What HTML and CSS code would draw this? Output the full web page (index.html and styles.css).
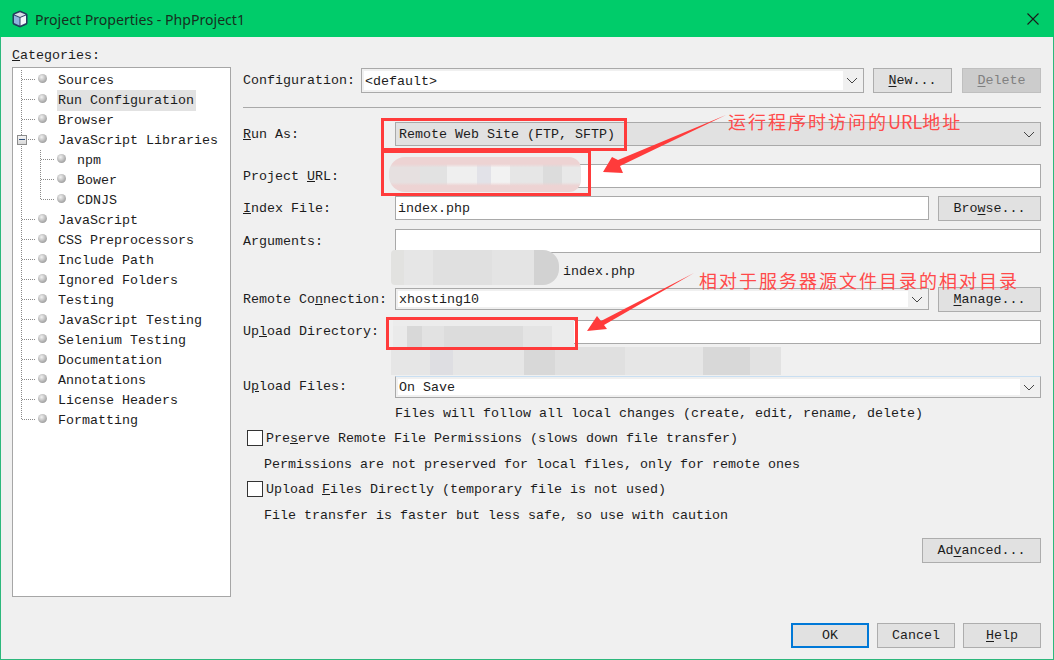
FILE: index.html
```html
<!DOCTYPE html>
<html lang="en">
<head>
    <meta charset="UTF-8">
    <meta name="viewport" content="width=device-width, initial-scale=1.0">
    <title>Project Properties - PhpProject1</title>
    <link rel="stylesheet" href="styles.css">
</head>
<body>
    <main class="window">
        <header class="titlebar">
            <svg class="app-icon" width="16" height="18" viewBox="0 0 16 18">
                <path d="M8 1 L14.5 3.8 Q15 4 15 4.8 V13.2 Q15 14 14.5 14.2 L8 17 L1.5 14.2 Q1 14 1 13.2 V4.8 Q1 4 1.5 3.8 Z" fill="#2c4468" stroke="#22375a"/>
                <path d="M8 2.2 L13.6 4.6 L8 7 L2.4 4.6 Z" fill="#d6dde6"/>
                <path d="M8.5 7.8 L14 5.5 V13 L8.5 15.6 Z" fill="#f2f6fa"/>
                <path d="M2 5.5 L7.5 7.8 V15.6 L2 13 Z" fill="#8fb4de"/>
            </svg>
            <span class="title-text">Project Properties - PhpProject1</span>
            <svg class="close-icon" width="14" height="14" viewBox="0 0 14 14">
                <path d="M1.5 1.5 L12.5 12.5 M12.5 1.5 L1.5 12.5" stroke="#1a1a1a" stroke-width="1.1" fill="none"/>
            </svg>
        </header>

        <div class="content">
            <section class="categories">
                <div class="categories-label"><u>C</u>ategories:</div>
                <ul class="tree">
                    <li class="node"><i class="branch"></i><i class="dot"></i><span>Sources</span></li>
                    <li class="node"><i class="branch"></i><i class="dot"></i><span class="selected">Run Configuration</span></li>
                    <li class="node"><i class="branch"></i><i class="dot"></i><span>Browser</span></li>
                    <li class="node"><i class="branch"><b class="minus"></b></i><i class="dot"></i><span>JavaScript Libraries</span></li>
                    <li class="node"><i class="pipe"></i><i class="branch-sub"></i><i class="dot"></i><span>npm</span></li>
                    <li class="node"><i class="pipe"></i><i class="branch-sub"></i><i class="dot"></i><span>Bower</span></li>
                    <li class="node"><i class="pipe"></i><i class="branch-sub last"></i><i class="dot"></i><span>CDNJS</span></li>
                    <li class="node"><i class="branch"></i><i class="dot"></i><span>JavaScript</span></li>
                    <li class="node"><i class="branch"></i><i class="dot"></i><span>CSS Preprocessors</span></li>
                    <li class="node"><i class="branch"></i><i class="dot"></i><span>Include Path</span></li>
                    <li class="node"><i class="branch"></i><i class="dot"></i><span>Ignored Folders</span></li>
                    <li class="node"><i class="branch"></i><i class="dot"></i><span>Testing</span></li>
                    <li class="node"><i class="branch"></i><i class="dot"></i><span>JavaScript Testing</span></li>
                    <li class="node"><i class="branch"></i><i class="dot"></i><span>Selenium Testing</span></li>
                    <li class="node"><i class="branch"></i><i class="dot"></i><span>Documentation</span></li>
                    <li class="node"><i class="branch"></i><i class="dot"></i><span>Annotations</span></li>
                    <li class="node"><i class="branch"></i><i class="dot"></i><span>License Headers</span></li>
                    <li class="node"><i class="branch last"></i><i class="dot"></i><span>Formatting</span></li>
                </ul>
            </section>

            <section class="settings">
                <div class="config-row">
                    <label class="config-label">Confi<u>g</u>uration:</label>
                    <div class="combo config-combo"><span class="combo-value">&lt;default&gt;</span><i class="chevron"></i></div>
                    <button class="btn btn-small"><u>N</u>ew...</button>
                    <button class="btn btn-small btn-disabled"><u>D</u>elete</button>
                </div>
                <hr class="divider">

                <div class="row row-run">
                    <label><u>R</u>un As:</label>
                    <div class="combo combo-grey"><span class="combo-value">Remote Web Site (FTP, SFTP)</span><i class="chevron"></i></div>
                </div>
                <div class="row row-url">
                    <label>Project <u>U</u>RL:</label>
                    <div class="field"></div>
                </div>
                <div class="row row-index">
                    <label><u>I</u>ndex File:</label>
                    <div class="field">index.php</div>
                    <button class="btn btn-side">Bro<u>w</u>se...</button>
                </div>
                <div class="row row-args">
                    <label>Ar<u>g</u>uments:</label>
                    <div class="field"></div>
                </div>
                <div class="row-hint">index.php</div>
                <div class="row row-remote">
                    <label>Remote Co<u>n</u>nection:</label>
                    <div class="combo"><span class="combo-value">xhosting10</span><i class="chevron"></i></div>
                    <button class="btn btn-side"><u>M</u>anage...</button>
                </div>
                <div class="row row-dir">
                    <label>Up<u>l</u>oad Directory:</label>
                    <div class="field"></div>
                </div>
                <div class="row row-files">
                    <label>U<u>p</u>load Files:</label>
                    <div class="combo combo-focus"><span class="combo-value">On Save</span><i class="chevron"></i></div>
                </div>
                <p class="note note-files">Files will follow all local changes (create, edit, rename, delete)</p>
                <div class="check check-first"><i class="box"></i><span>Pre<u>s</u>erve Remote File Permissions (slows down file transfer)</span></div>
                <p class="note note-check">Permissions are not preserved for local files, only for remote ones</p>
                <div class="check check-second"><i class="box"></i><span>Upload <u>F</u>iles Directly (temporary file is not used)</span></div>
                <p class="note note-check">File transfer is faster but less safe, so use with caution</p>
                <div class="advanced-row"><button class="btn btn-advanced">Ad<u>v</u>anced...</button></div>
            </section>
        </div>

        <footer class="actions">
            <button class="btn btn-action btn-default">OK</button>
            <button class="btn btn-action">Cancel</button>
            <button class="btn btn-action"><u>H</u>elp</button>
        </footer>

        <!-- screenshot markup on top of the dialog -->
        <div class="blur blur-url"></div>
        <div class="blur blur-path"></div>
        <div class="blur blur-dir"></div>
        <div class="blur blur-dir-note"></div>
        <div class="mark mark-run"></div>
        <div class="mark mark-url"></div>
        <div class="mark mark-dir"></div>
        <div class="callout callout-run">运行程序时访问的<span class="callout-latin">URL</span>地址</div>
        <div class="callout callout-dir">相对于服务器源文件目录的相对目录</div>
        <svg class="arrows" width="1054" height="660" viewBox="0 0 1054 660">
            <polygon points="725,115 617,160 611,157 602,172 622,173 619,166" fill="#ff3b3b"/>
            <polygon points="693,273 600,321 596,316 586,331 606,329 603,325" fill="#ff3b3b"/>
        </svg>
    </main>
</body>
</html>
```

FILE: styles.css
```css
*{
    box-sizing: border-box;
}

html, body{
    margin: 0;
    height: 100%;
    overflow: hidden;
}

.window{
    position: relative;
    width: 1054px;
    height: 660px;
    display: flex;
    flex-direction: column;
    background-color: #f0f0f0;
    border: 1px solid #2db87c;
    border-top: none;
    font-family: "Liberation Mono", "Courier New", monospace;
    font-size: 13.33px;
    color: #1c1c1c;
}

/* title bar */

.titlebar{
    height: 37px;
    margin: 0 -1px;
    flex: none;
    display: flex;
    align-items: center;
    padding: 0 14px 0 12px;
    background-color: #00cc6a;
}

.app-icon{
    margin-right: 7px;
}

.title-text{
    flex: 1;
    font-family: "Noto Sans", sans-serif;
    font-size: 14.1px;
    padding-top: 1px;
    color: #16301f;
}

/* main area */

.content{
    flex: 1;
    display: flex;
    min-height: 0;
}

.categories{
    width: 219px;
    margin-left: 11px;
    padding-top: 10px;
    display: flex;
    flex-direction: column;
}

.categories-label{
    height: 20px;
    line-height: 18px;
}

.tree{
    list-style: none;
    margin: 0;
    padding: 0;
    height: 530px;
    background-color: white;
    border: 1px solid #a6a6a6;
    padding-top: 2px;
}

.node{
    height: 20px;
    display: flex;
    align-items: center;
}

.node i{
    flex: none;
}

.branch, .branch-sub, .pipe{
    height: 20px;
    display: block;
    position: relative;
    background-repeat: no-repeat;
}

/* dotted tree lines */

.branch{
    width: 25px;
    background-image:
        repeating-linear-gradient(to bottom, #8a8a8a 0 1px, transparent 1px 2px),
        repeating-linear-gradient(to right, #8a8a8a 0 1px, transparent 1px 2px);
    background-size: 1px 20px, 13px 1px;
    background-position: 8px 0, 9px 9px;
}

.pipe{
    width: 19px;
    background-image: repeating-linear-gradient(to bottom, #8a8a8a 0 1px, transparent 1px 2px);
    background-size: 1px 20px;
    background-position: 8px 0;
}

.branch-sub{
    width: 25px;
    background-image:
        repeating-linear-gradient(to bottom, #8a8a8a 0 1px, transparent 1px 2px),
        repeating-linear-gradient(to right, #8a8a8a 0 1px, transparent 1px 2px);
    background-size: 1px 20px, 13px 1px;
    background-position: 8px 0, 9px 9px;
}

.branch.last, .branch-sub.last{
    background-size: 1px 10px, 13px 1px;
}

.minus{
    position: absolute;
    left: 4px;
    top: 5px;
    width: 10px;
    height: 10px;
    background: linear-gradient(#f4f4f4, #d8d8d8);
    border: 1px solid #8c8c8c;
}

.minus::after{
    content: "";
    position: absolute;
    left: 1px;
    top: 3px;
    width: 6px;
    height: 1px;
    background-color: #34507a;
}

.dot{
    width: 9px;
    height: 9px;
    margin-top: -3px;
    margin-right: 11px;
    border-radius: 50%;
    background: radial-gradient(circle at 40% 35%, #f2f2f2, #a4a4a4 70%, #8c8c8c);
}

.node span{
    line-height: 20px;
    padding-top: 1px;
    white-space: nowrap;
}

.node .selected{
    background-color: #e2e2e2;
    margin-left: -1px;
    padding: 1px 2px 0 1px;
}

.settings{
    width: 798px;
    margin-left: 12px;
    padding-top: 31px;
}

.settings p{
    margin: 0;
}

/* rows */

.config-row{
    display: flex;
    align-items: center;
    height: 25px;
}

.config-label{
    width: 118px;
}

.config-combo{
    flex: none;
    width: 503px;
    height: 22px;
    margin-right: 9px;
}

.divider{
    margin: 14px 0 14px 0;
    height: 1px;
    border: none;
    background-color: #a9a9a9;
}

.row{
    display: flex;
    align-items: center;
    height: 24px;
}

.row label{
    width: 152px;
    flex: none;
}

.row-url{ margin-top: 18px; }
.row-index{ margin-top: 8px; }
.row-args{ margin-top: 9px; }
.row-remote{ margin-top: 0; height: 22px; }
.row-dir{ margin-top: 10px; }
.row-files{ margin-top: 32px; height: 22px; }

.row-dir label, .row-files label{
    padding-bottom: 2px;
}

.row-hint{
    height: 35px;
    line-height: 38px;
    padding-left: 320px;
}

/* inputs */

.field{
    flex: 1;
    height: 100%;
    min-width: 0;
    padding-left: 2px;
    line-height: 23px;
    background-color: white;
    border: 1px solid #a9a9a9;
}

.combo{
    flex: 1;
    height: 100%;
    display: flex;
    align-items: center;
    padding: 2px;
    background-color: #f0f0f0;
    border: 1px solid #a9a9a9;
}

.combo-value{
    flex: 1;
    height: 100%;
    padding-left: 1px;
    padding-top: 1px;
    background-color: white;
    display: flex;
    align-items: center;
}

.combo-grey{
    background-color: #e1e1e1;
}

.combo-grey .combo-value{
    background-color: #e1e1e1;
}

.combo-focus{
    border-top-color: #c9dff2;
}

.combo-focus .combo-value{
    padding-top: 0;
}

.chevron{
    flex: none;
    width: 18px;
    height: 100%;
    background:
        linear-gradient(45deg, transparent 46%, #444 46% 54%, transparent 54%) 4px 50% / 5px 5px no-repeat,
        linear-gradient(-45deg, transparent 46%, #444 46% 54%, transparent 54%) 9px 50% / 5px 5px no-repeat;
}

/* buttons */

.btn{
    font: inherit;
    color: inherit;
    height: 25px;
    padding: 0;
    background-color: #e1e1e1;
    border: 1px solid #adadad;
}

.btn u{
    text-underline-offset: 2px;
}

.btn-small{
    width: 79px;
}

.btn-small + .btn-small{
    margin-left: 10px;
}

.btn-disabled{
    background-color: #cccccc;
    border-color: #bfbfbf;
    color: #808080;
}

.btn-side{
    width: 103px;
    margin-left: 9px;
    flex: none;
}

.btn-action{
    width: 78px;
}

.btn-default{
    border: 2px solid #0078d7;
}

/* notes and check boxes */

.note{
    padding-left: 152px;
    line-height: 16px;
}

.settings .note-files{
    margin-top: 8px;
}

.settings .note-check{
    padding-left: 21px;
    margin-top: 11px;
}

.check{
    display: flex;
    align-items: center;
    height: 16px;
    padding-left: 4px;
}

.check-first{
    margin-top: 8px;
}

.check-second{
    margin-top: 8px;
}

.box{
    width: 16px;
    height: 16px;
    margin-right: 3px;
    background-color: white;
    border: 1px solid #333;
}

.advanced-row{
    display: flex;
    justify-content: flex-end;
    margin-top: 14px;
}

.btn-advanced{
    width: 119px;
}

.actions{
    flex: none;
    display: flex;
    justify-content: flex-end;
    gap: 8px;
    padding: 0 12px 11px 0;
}

/* markup overlay */

.blur, .mark, .callout, .arrows{
    position: absolute;
}

.blur{
    background-color: #e4e4e4;
}

.blur-url{
    left: 388px;
    top: 157px;
    width: 192px;
    height: 35px;
    border-radius: 16px 12px 12px 16px;
    background:
        linear-gradient(to bottom, #edd3d3 0 20%, transparent 30% 72%, #edd3d3 82%),
        linear-gradient(to right, #e6e0e0 0 16%, #e2e2e2 16% 30%, #efefef 30% 46%, #e2e2e8 46% 53%, #f2f2f2 53% 63%, #e6e6e6 63% 80%, #dcdcdc 80% 90%, #e8e8e8 90%);
}

.blur-path{
    left: 390px;
    top: 250px;
    width: 168px;
    height: 35px;
    border-radius: 4px 16px 16px 4px;
    background:
        linear-gradient(to right, #e2e2e0 0 8%, #e6e6e6 8% 25%, #e0e0e0 25% 60%, #e4e4e4 60% 85%, #d2d2d2 85%);
}

.blur-dir{
    left: 392px;
    top: 319px;
    width: 181px;
    height: 28px;
    background:
        linear-gradient(to bottom, #ececec 0 25%, transparent 25%),
        linear-gradient(to right, #eaeaea 0 8%, #d8d8d8 8% 16%, #e2e2e2 16% 28%, #dcdcdc 28% 72%, #e4e4e4 72% 88%, #ececec 88%);
}

.blur-dir-note{
    left: 390px;
    top: 347px;
    width: 390px;
    height: 28px;
    background:
        linear-gradient(to right, #e6e6e6 0 10%, #dedee2 10% 16%, #e6e6e6 16% 34%, #d8d8d8 34% 42%, #e0e0e0 42% 60%, #e6e6e6 60% 80%, #d8d8d8 80% 92%, #e2e2e2 92%);
}

.mark{
    border: 3px solid #ff3b3b;
}

.mark-run{
    left: 380px;
    top: 118px;
    width: 246px;
    height: 33px;
}

.mark-url{
    left: 380px;
    top: 150px;
    width: 210px;
    height: 46px;
}

.mark-dir{
    left: 385px;
    top: 317px;
    width: 192px;
    height: 33px;
}

.callout{
    font-family: "Noto Sans CJK SC", sans-serif;
    font-size: 18px;
    letter-spacing: 2px;
    line-height: 22px;
    color: #ff4a4a;
    white-space: nowrap;
}

.callout-latin{
    letter-spacing: 0;
}

.callout-run{
    left: 727px;
    top: 110px;
}

.callout-dir{
    left: 698px;
    top: 269px;
}

.arrows{
    left: 0;
    top: 0;
    pointer-events: none;
}
```
